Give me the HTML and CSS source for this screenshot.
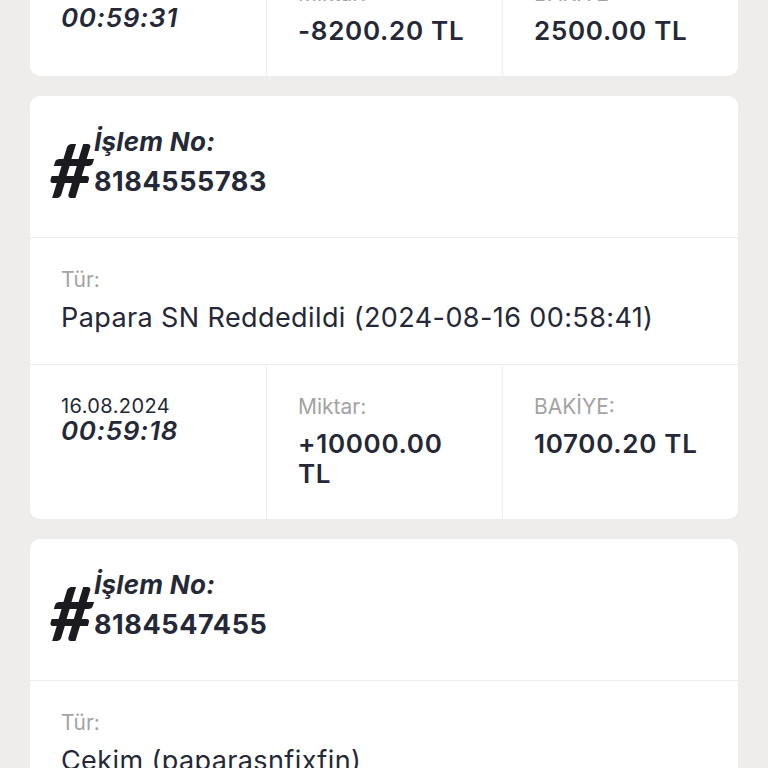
FILE: index.html
```html
<html>
    <head>
        <title>İşlem Geçmişi</title>
        <link rel="stylesheet" href="styles.css">
    </head>
    <body>
        <div class="list">
            <div class="card">
                <div class="head">
                    <span class="hash">#</span>
                    <div class="head-text">
                        <div class="head-label">İşlem No:</div>
                        <div class="head-no">8184562910</div>
                    </div>
                </div>
                <div class="type">
                    <div class="label">Tür:</div>
                    <div class="type-text">Cekim (paparasnfixfin)</div>
                </div>
                <div class="row">
                    <div class="cell">
                        <div class="date">16.08.2024</div>
                        <div class="time">00:59:31</div>
                    </div>
                    <div class="cell">
                        <div class="label">Miktar:</div>
                        <div class="value">-8200.20 TL</div>
                    </div>
                    <div class="cell">
                        <div class="label">BAKİYE:</div>
                        <div class="value">2500.00 TL</div>
                    </div>
                </div>
            </div>

            <div class="card">
                <div class="head">
                    <span class="hash">#</span>
                    <div class="head-text">
                        <div class="head-label">İşlem No:</div>
                        <div class="head-no">8184555783</div>
                    </div>
                </div>
                <div class="type">
                    <div class="label">Tür:</div>
                    <div class="type-text">Papara SN Reddedildi (2024-08-16 00:58:41)</div>
                </div>
                <div class="row">
                    <div class="cell">
                        <div class="date">16.08.2024</div>
                        <div class="time">00:59:18</div>
                    </div>
                    <div class="cell">
                        <div class="label">Miktar:</div>
                        <div class="value">+10000.00 TL</div>
                    </div>
                    <div class="cell">
                        <div class="label">BAKİYE:</div>
                        <div class="value">10700.20 TL</div>
                    </div>
                </div>
            </div>

            <div class="card">
                <div class="head">
                    <span class="hash">#</span>
                    <div class="head-text">
                        <div class="head-label">İşlem No:</div>
                        <div class="head-no">8184547455</div>
                    </div>
                </div>
                <div class="type">
                    <div class="label">Tür:</div>
                    <div class="type-text">Cekim (paparasnfixfin)</div>
                </div>
                <div class="row">
                    <div class="cell">
                        <div class="date">16.08.2024</div>
                        <div class="time">00:58:41</div>
                    </div>
                    <div class="cell">
                        <div class="label">Miktar:</div>
                        <div class="value">-10000.00 TL</div>
                    </div>
                    <div class="cell">
                        <div class="label">BAKİYE:</div>
                        <div class="value">700.20 TL</div>
                    </div>
                </div>
            </div>
        </div>
    </body>
</html>
```

FILE: styles.css
```css
body{
    margin: 0;
    background-color: #eeedeb;
    font-family: Inter, 'Open Sans', sans-serif;
    color: #252836;
}
.list{
    display: flex;
    flex-direction: column;
    gap: 20px;
    padding: 0 30px;
    margin-top: -317px;
}
.card{
    background-color: white;
    border-radius: 10px;
    overflow: hidden;
}
.head{
    display: flex;
    align-items: center;
    height: 141px;
    padding: 0 20px;
    border-bottom: 1px solid #ececec;
}
.hash{
    font-family: Lato, sans-serif;
    font-size: 74px;
    font-weight: 900;
    font-style: italic;
    line-height: 1;
    color: #1b1b1f;
    margin-top: 6px;
    margin-right: 1px;
}
.head-label{
    font-size: 26px;
    font-weight: 700;
    font-style: italic;
    letter-spacing: 0.3px;
    line-height: 28px;
    margin-top: -6px;
}
.head-no{
    font-size: 27px;
    font-weight: 700;
    letter-spacing: 0.6px;
    line-height: 36px;
    margin-top: 8px;
}
.type{
    padding: 30px 31px;
    border-bottom: 1px solid #ececec;
}
.label{
    font-size: 21px;
    line-height: 24px;
    color: #a3a3a3;
}
.type-text{
    font-size: 27px;
    letter-spacing: 0.4px;
    line-height: 32px;
    margin-top: 10px;
}
.row{
    display: grid;
    grid-template-columns: 1fr 1fr 1fr;
}
.cell{
    padding: 30px 31px;
}
.cell + .cell{
    border-left: 1px solid #ececec;
}
.date{
    font-size: 20px;
    letter-spacing: 0.4px;
    line-height: 22px;
}
.time{
    font-size: 26px;
    font-weight: 600;
    font-style: italic;
    letter-spacing: 0.7px;
    line-height: 28px;
}
.value{
    font-size: 26px;
    font-weight: 600;
    letter-spacing: 0.7px;
    line-height: 30px;
    margin-top: 10px;
}
```
